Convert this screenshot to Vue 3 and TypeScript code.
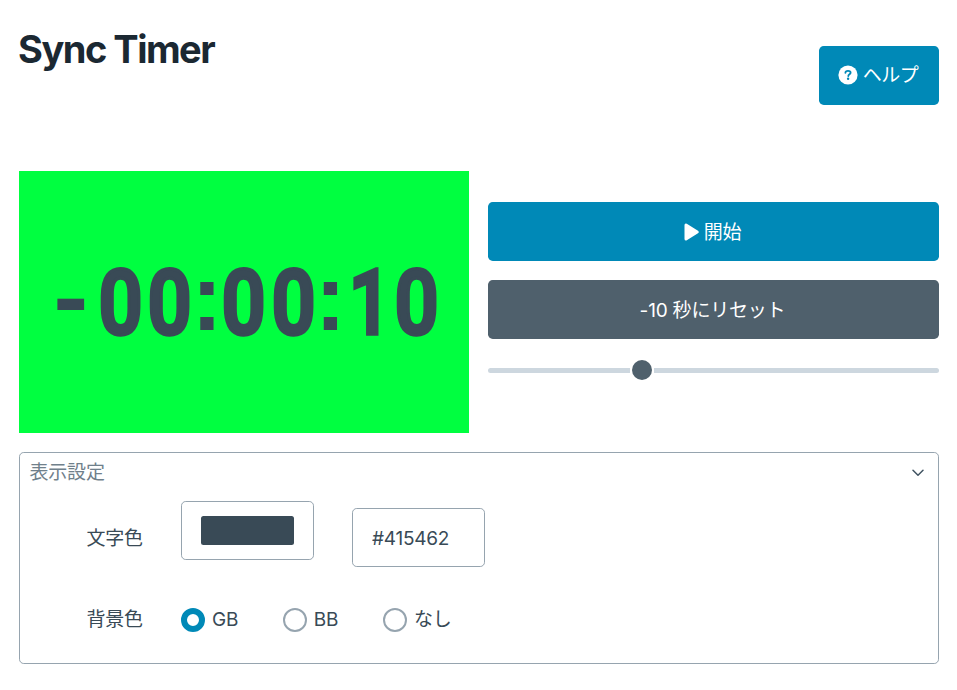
<script setup lang="ts">
import { computed, ref } from 'vue'

const textColor = ref('#415462')
const offset = ref(-10)
const background = ref('GB')
const backgrounds = [
  { value: 'GB', label: 'GB' },
  { value: 'BB', label: 'BB' },
  { value: 'none', label: 'なし' },
]

const characters = computed(() => {
  const total = Math.abs(offset.value)
  const parts = [Math.floor(total / 3600), Math.floor(total / 60) % 60, total % 60]
  const text = (offset.value < 0 ? '-' : '') + parts.map((n) => String(n).padStart(2, '0')).join(':')
  return text.split('')
})

function kind(char: string): string {
  if (char === ':') return 'colon'
  if (char === '-') return 'minus'
  return char === '1' ? 'digit one' : 'digit'
}
</script>

<template>
  <main class="page">
    <header class="header">
      <h1>Sync Timer</h1>
      <button class="button help" type="button">
        <svg class="help-icon" viewBox="0 0 20 20" aria-hidden="true">
          <circle cx="10" cy="10" r="9.6" fill="#fff" />
          <path d="M7.4 7.8C7.5 6.4 8.4 5.9 10 5.9c1.6 0 2.6.7 2.6 1.9 0 1.5-2.3 1.6-2.3 3.3" fill="none" stroke="#0089b7" stroke-width="1.8" stroke-linecap="round" />
          <circle cx="10.1" cy="13.8" r="1.2" fill="#0089b7" />
        </svg>
        <span class="caption">ヘルプ</span>
      </button>
    </header>

    <section class="timer">
      <div class="display">
        <span v-for="(char, i) in characters" :key="i" class="cell" :class="kind(char)"><span class="glyph">{{ char }}</span></span>
      </div>
      <div class="controls">
        <button class="button start" type="button">
          <svg class="play-icon" viewBox="0 0 15 18" aria-hidden="true">
            <path d="M2 2v14L13.2 9z" fill="#fff" stroke="#fff" stroke-width="3" stroke-linejoin="round" />
          </svg>
          <span class="caption">開始</span>
        </button>
        <button class="button secondary" type="button"><span class="caption">-10 秒にリセット</span></button>
        <div class="range"><span class="track left"></span><span class="thumb"></span><span class="track right"></span></div>
      </div>
    </section>

    <section class="settings">
      <div class="summary">
        <span>表示設定</span>
        <svg class="chevron" viewBox="0 0 12 8" aria-hidden="true">
          <path d="M1 1.2l5 5 5-5" fill="none" stroke="#415462" stroke-width="1.5" stroke-linecap="round" stroke-linejoin="round" />
        </svg>
      </div>
      <div class="row color-row">
        <span class="label">文字色</span>
        <div class="swatch-box"><div class="swatch"></div></div>
        <input v-model="textColor" class="hex" type="text" />
      </div>
      <div class="row radio-row">
        <span class="label">背景色</span>
        <label v-for="item in backgrounds" :key="item.value" class="option">
          <input v-model="background" type="radio" :value="item.value" />
          <span>{{ item.label }}</span>
        </label>
      </div>
    </section>
  </main>
</template>

<style>
body {
  background: #fff;
}
</style>

<style scoped>
.page,
.page * {
  box-sizing: border-box;
}
.page {
  width: 957px;
  height: 690px;
  padding: 0 18px 0 19px;
  overflow: hidden;
  font: 400 19px/28.5px Inter, 'Noto Sans CJK JP', sans-serif;
  letter-spacing: -0.2px;
  color: #394a56;
}
.header {
  height: 171px;
  display: flex;
  justify-content: space-between;
  align-items: flex-start;
}
h1 {
  margin: 26px 0 0 -1px;
  font-size: 38px;
  line-height: 46px;
  font-weight: 700;
  letter-spacing: -1.5px;
  color: #1b2832;
}
.button {
  width: 100%;
  height: 59px;
  padding: 0;
  border: 0;
  border-radius: 4.75px;
  display: flex;
  align-items: center;
  justify-content: center;
  background: #0089b7;
  color: #fff;
  font: inherit;
  letter-spacing: inherit;
}
.caption {
  padding-top: 3px;
}
.start {
  padding-right: 2px;
}
.secondary {
  padding-right: 2px;
  background: #4f606c;
}
.help {
  width: 120px;
  margin-top: 46px;
  padding-right: 2px;
  gap: 5px;
}
.help .caption {
  padding-top: 2px;
  letter-spacing: -0.5px;
}
.help-icon {
  width: 20px;
  height: 20px;
  margin-bottom: 2px;
}
.play-icon {
  width: 15px;
  height: 18px;
  margin-right: 5px;
}
.timer {
  display: grid;
  grid-template-columns: 450px 451px;
  column-gap: 19px;
  height: 262px;
}
.display {
  display: flex;
  justify-content: center;
  align-items: center;
  padding-top: 4px;
  background: #00ff40;
  color: #394a56;
  font: 800 94px/110px Roboto, sans-serif;
  letter-spacing: 0;
}
.cell {
  display: flex;
  justify-content: center;
  width: 49.5px;
  height: 110px;
}
.glyph {
  display: block;
  flex: none;
}
.digit .glyph {
  font-size: 90px;
  font-weight: 600;
  -webkit-text-stroke: 3.5px #394a56;
  transform: scaleX(0.86);
}
.one .glyph {
  transform: translateX(2px) scaleX(0.82);
}
.minus .glyph {
  transform: translateY(-3px);
}
.colon {
  width: 24.5px;
  font-family: 'Liberation Sans', sans-serif;
  font-weight: 700;
}
.colon .glyph {
  transform: translateY(-6px);
}
.controls {
  padding-top: 31px;
  display: flex;
  flex-direction: column;
  gap: 19px;
}
.range {
  height: 24px;
  display: flex;
  align-items: center;
}
.track {
  height: 5px;
  background: #cdd7df;
}
.left {
  width: 142px;
  border-radius: 3px 0 0 3px;
}
.right {
  flex: 1;
  border-radius: 0 3px 3px 0;
}
.thumb {
  width: 20px;
  height: 20px;
  margin: 0 2px;
  border-radius: 50%;
  background: #4f606c;
}
.settings {
  width: 920px;
  height: 212px;
  margin-top: 19px;
  border: 1px solid #96a4af;
  border-radius: 4.75px;
}
.summary {
  height: 38px;
  padding: 2px 14px 0 9.5px;
  display: flex;
  align-items: center;
  justify-content: space-between;
  color: #70808b;
}
.chevron {
  width: 12px;
  height: 8px;
}
.row {
  display: flex;
  align-items: center;
  padding-left: 66.5px;
}
.label {
  width: 94.5px;
}
.color-row {
  height: 94px;
}
.color-row .label {
  padding-top: 2px;
}
.swatch-box {
  width: 133px;
  height: 59px;
  margin: -15px 38px 0 0;
  padding: 14px 19px;
  border: 1px solid #96a4af;
  border-radius: 4.75px;
}
.swatch {
  height: 29px;
  border-radius: 2.5px;
  background: #394a56;
}
.hex {
  width: 133px;
  height: 59px;
  margin: 0 0 2px;
  padding: 2px 19px 0;
  border: 1px solid #96a4af;
  border-radius: 4.75px;
  background: #fff;
  font: inherit;
  letter-spacing: -0.25px;
  color: inherit;
}
.radio-row {
  height: 70px;
}
.option {
  display: flex;
  align-items: center;
  gap: 7px;
  margin-right: 44.6px;
}
.option input {
  appearance: none;
  width: 24px;
  height: 24px;
  margin: 0;
  border: 2px solid #96a4af;
  border-radius: 50%;
}
.option input:checked {
  border: 6px solid #0089b7;
}
</style>
